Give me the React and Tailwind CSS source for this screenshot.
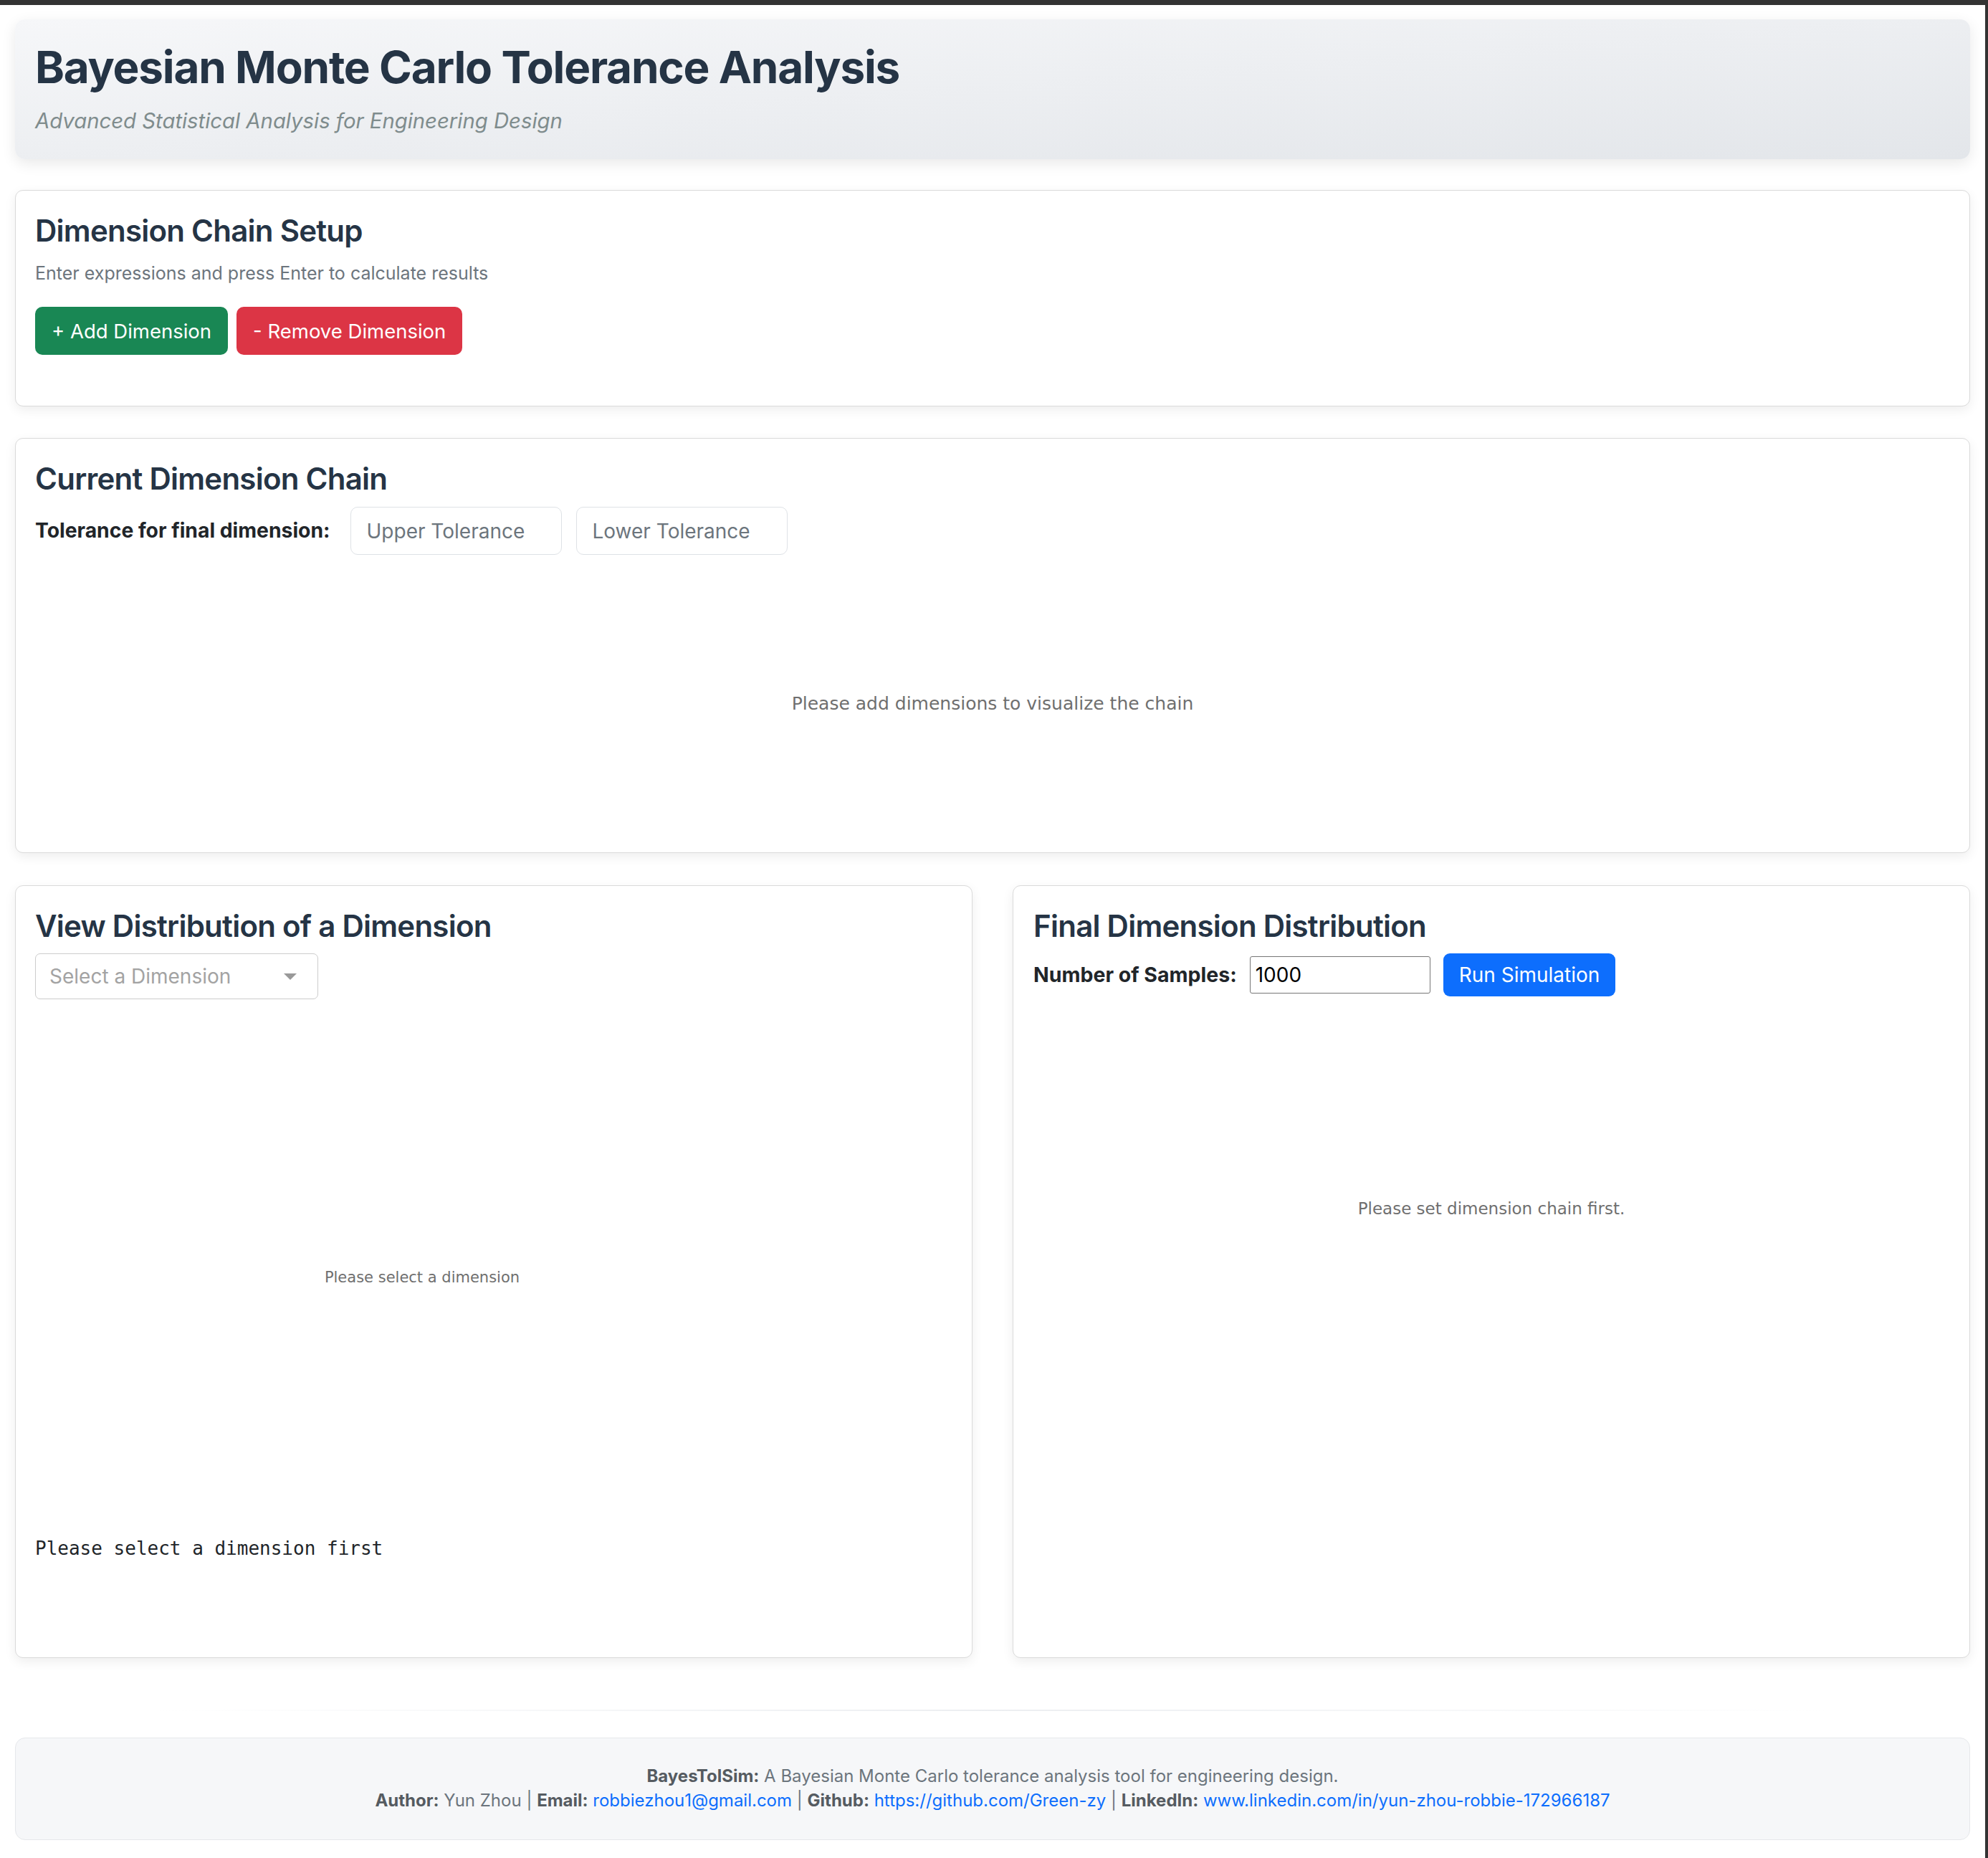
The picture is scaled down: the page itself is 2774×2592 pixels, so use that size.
import React from 'react';

const Card = ({ className = '', children }) => (
  <div className={`rounded-[11px] border border-[#dadada] bg-white shadow-[0_5px_16px_rgba(0,0,0,0.07)] ${className}`}>
    {children}
  </div>
);

const Heading = ({ children, className = '' }) => (
  <h2 className={`text-[42px] font-semibold leading-[50px] tracking-[-0.75px] text-[#253445] ${className}`}>{children}</h2>
);

export default function App() {
  return (
    <div className="min-h-[2592px] border-t-[7px] border-r-[4px] border-[#333333] bg-white px-[21px] pb-[25px] font-['Inter',sans-serif] text-[#212529]">
      {/* header */}
      <header className="mt-[20px] rounded-[14px] bg-gradient-to-br from-[#f6f7f9] to-[#e3e6ea] px-[28px] pt-[30px] pb-[31px] shadow-[0_6px_20px_rgba(0,0,0,0.09)]">
        <h1 className="text-[62px] font-bold leading-[74px] tracking-[-1.2px] text-[#253445]">
          Bayesian Monte Carlo Tolerance Analysis
        </h1>
        <p className="mt-[16px] text-[29.3px] italic leading-[44px] text-[#7f8c8d]">
          Advanced Statistical Analysis for Engineering Design
        </p>
      </header>

      {/* setup */}
      <Card className="mt-[43px] px-[27px] pt-[31px] pb-[71px]">
        <Heading>Dimension Chain Setup</Heading>
        <p className="mt-[17px] text-[25px] leading-[34px] text-[#6c757d]">
          Enter expressions and press Enter to calculate results
        </p>
        <div className="mt-[30px] flex gap-[12px]">
          <button className="flex h-[67px] items-center rounded-[10px] bg-[#198754] px-[23px] pt-[3px] text-[27.5px] text-white">
            + Add Dimension
          </button>
          <button className="flex h-[67px] items-center rounded-[10px] bg-[#dc3545] px-[23px] pt-[3px] text-[27.5px] text-white">
            - Remove Dimension
          </button>
        </div>
      </Card>

      {/* chain */}
      <Card className="mt-[44px] px-[27px] pt-[31px]">
        <Heading>Current Dimension Chain</Heading>
        <div className="mt-[14px] flex items-center">
          <span className="mr-[28px] text-[28.3px] font-bold">Tolerance for final dimension:</span>
          <input
            placeholder="Upper Tolerance"
            className="h-[67px] w-[295px] rounded-[10px] border border-[#dee2e6] px-[22px] text-[28px] placeholder:text-[#6c757d]"
          />
          <input
            placeholder="Lower Tolerance"
            className="ml-[20px] h-[67px] w-[295px] rounded-[10px] border border-[#dee2e6] px-[22px] text-[28px] placeholder:text-[#6c757d]"
          />
        </div>
        <div className="flex h-[415px] items-center justify-center font-['DejaVu_Sans',sans-serif] text-[25px] text-[#6f6f6f]">
          Please add dimensions to visualize the chain
        </div>
      </Card>

      {/* distributions */}
      <div className="mt-[45px] grid grid-cols-2 gap-[56px]">
        <Card className="flex h-[1078px] flex-col px-[27px] pt-[31px]">
          <Heading>View Distribution of a Dimension</Heading>
          <div className="mt-[13px] flex h-[64px] w-[395px] items-center justify-between rounded-[7px] border border-[#cccccc] pl-[19px] pr-[29px]">
            <span className="text-[28px] text-[#a3a3a3]">Select a Dimension</span>
            <span className="h-0 w-0 border-x-[9px] border-t-[9px] border-x-transparent border-t-[#999999]" />
          </div>
          <div className="mt-[35px] flex h-[708px] w-[1080px] items-center justify-center font-['DejaVu_Sans',sans-serif] text-[21px] text-[#6f6f6f]">
            Please select a dimension
          </div>
          <pre className="mt-[4px] font-['DejaVu_Sans_Mono',monospace] text-[26px] leading-[39px] text-[#212529]">
            Please select a dimension first
          </pre>
        </Card>

        <Card className="flex h-[1078px] flex-col px-[28px] pt-[31px]">
          <Heading>Final Dimension Distribution</Heading>
          <div className="mt-[13px] flex h-[60px] items-center">
            <span className="mr-[18px] text-[28.5px] font-bold">Number of Samples:</span>
            <input
              defaultValue="1000"
              className="h-[52px] w-[252px] rounded-[3px] border border-[#767676] px-[7px] text-[28px] text-black"
            />
            <button className="ml-[18px] flex h-[60px] items-center rounded-[9px] bg-[#0d6efd] px-[22px] text-[28px] text-white">
              Run Simulation
            </button>
          </div>
          <div className="flex h-[592px] items-center justify-center font-['DejaVu_Sans',sans-serif] text-[23px] text-[#6f6f6f]">
            Please set dimension chain first.
          </div>
        </Card>
      </div>

      {/* footer */}
      <div className="mx-[200px] mt-[72px] h-[2px] bg-gradient-to-r from-transparent via-[#eceef1] to-transparent" />
      <footer className="mt-[37px] rounded-[14px] border border-[#e6e8eb] bg-[#f6f7f9] pt-[36px] pb-[37px] text-center text-[24px] leading-[34px] text-[#6c757d]">
        <p>
          <strong className="font-bold text-[#555b61]">BayesTolSim:</strong> A Bayesian Monte Carlo tolerance analysis tool for engineering design.
        </p>
        <p>
          <strong className="font-bold text-[#555b61]">Author:</strong> Yun Zhou |{' '}
          <strong className="font-bold text-[#555b61]">Email:</strong>{' '}
          <a className="text-[#0d6efd]">robbiezhou1@gmail.com</a> |{' '}
          <strong className="font-bold text-[#555b61]">Github:</strong>{' '}
          <a className="text-[#0d6efd]">https://github.com/Green-zy</a> |{' '}
          <strong className="font-bold text-[#555b61]">LinkedIn:</strong>{' '}
          <a className="text-[#0d6efd]">www.linkedin.com/in/yun-zhou-robbie-172966187</a>
        </p>
      </footer>
    </div>
  );
}
